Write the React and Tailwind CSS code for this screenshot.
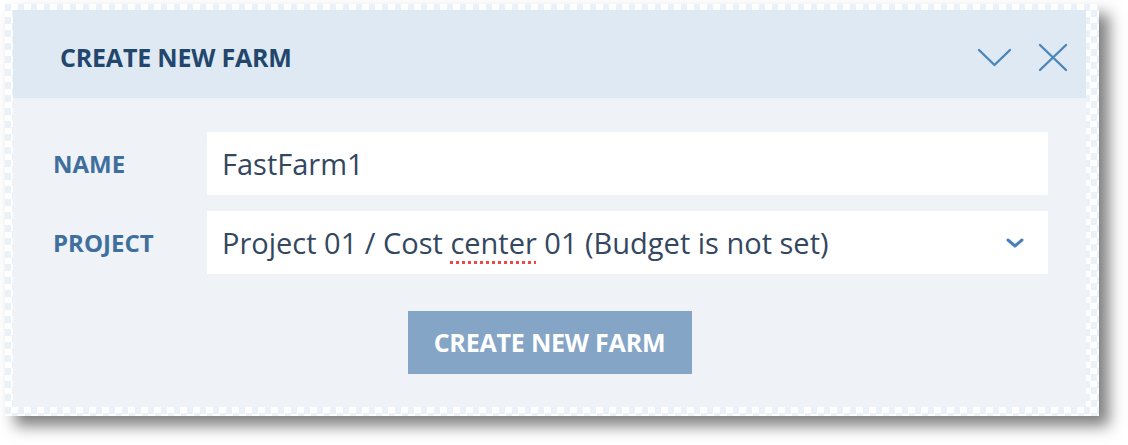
import { useState } from 'react';

export default function App() {
  const [name, setName] = useState('FastFarm1');

  return (
    <div className="w-[1128px] h-[445px] bg-white" style={{ fontFamily: '"Open Sans", "Noto Sans", sans-serif' }}>
      <div className="absolute left-[5px] top-[4px] w-[1094px] h-[412px] pl-[8px] pt-[6px] pr-[13px] pb-[9px] bg-[repeating-conic-gradient(#ffffff_0_25%,#ebf1f8_0_50%)] bg-[length:13px_13px] shadow-[10px_10px_14px_rgba(0,0,0,0.5)]">
        <div className="h-full flex flex-col bg-[#eff3f8]">
          <div className="h-[88px] shrink-0 flex items-center justify-between bg-[#dfe9f3] pl-[47px] pr-[18px]">
            <h1 className="text-[25px] font-bold text-[#22466c] tracking-[-0.2px] pt-[7px]">CREATE NEW FARM</h1>
            <div className="flex items-center gap-[26px] pt-[6px]">
              <svg width="35" height="20" viewBox="0 0 35 20" fill="none" stroke="#4a86b8" strokeWidth="2.4" strokeLinecap="round" strokeLinejoin="round">
                <path d="M2 3 L17.5 18 L33 3" />
              </svg>
              <svg width="30" height="29" viewBox="0 0 30 29" fill="none" stroke="#4a86b8" strokeWidth="2.4" strokeLinecap="round">
                <path d="M2 2 L28 27 M28 2 L2 27" />
              </svg>
            </div>
          </div>

          <div className="flex-1 flex flex-col pl-[40px] pr-[38px] pt-[34px]">
            <div className="flex items-center h-[63px]">
              <label className="w-[154px] text-[24px] font-bold text-[#3f6f9d]">NAME</label>
              <input
                value={name}
                onChange={(e) => setName(e.target.value)}
                className="flex-1 h-full bg-white px-[15px] text-[29px] text-[#33475f] outline-none"
              />
            </div>
            <div className="flex items-center h-[63px] mt-[16px]">
              <label className="w-[154px] text-[24px] font-bold text-[#3f6f9d]">PROJECT</label>
              <div className="flex-1 h-full bg-white pl-[15px] pr-[24px] flex items-center justify-between">
                <span className="text-[29px] text-[#33475f] whitespace-nowrap">
                  Project 01 / Cost <span className="underline decoration-dotted decoration-[#f04848] decoration-[3px] underline-offset-[7px]">center</span> 01 (Budget is not set)
                </span>
                <svg width="18" height="10" viewBox="0 0 18 10" fill="none" stroke="#4a80b5" strokeWidth="3" strokeLinecap="round" strokeLinejoin="round">
                  <path d="M2 2 L9 8 L16 2" />
                </svg>
              </div>
            </div>
            <div className="flex justify-center mt-[37px] -ml-[40px] -mr-[38px]">
              <button className="w-[284px] h-[63px] bg-[#84a5c6] text-white text-[25px] font-bold tracking-[-0.2px]">
                CREATE NEW FARM
              </button>
            </div>
          </div>
        </div>
      </div>
    </div>
  );
}
